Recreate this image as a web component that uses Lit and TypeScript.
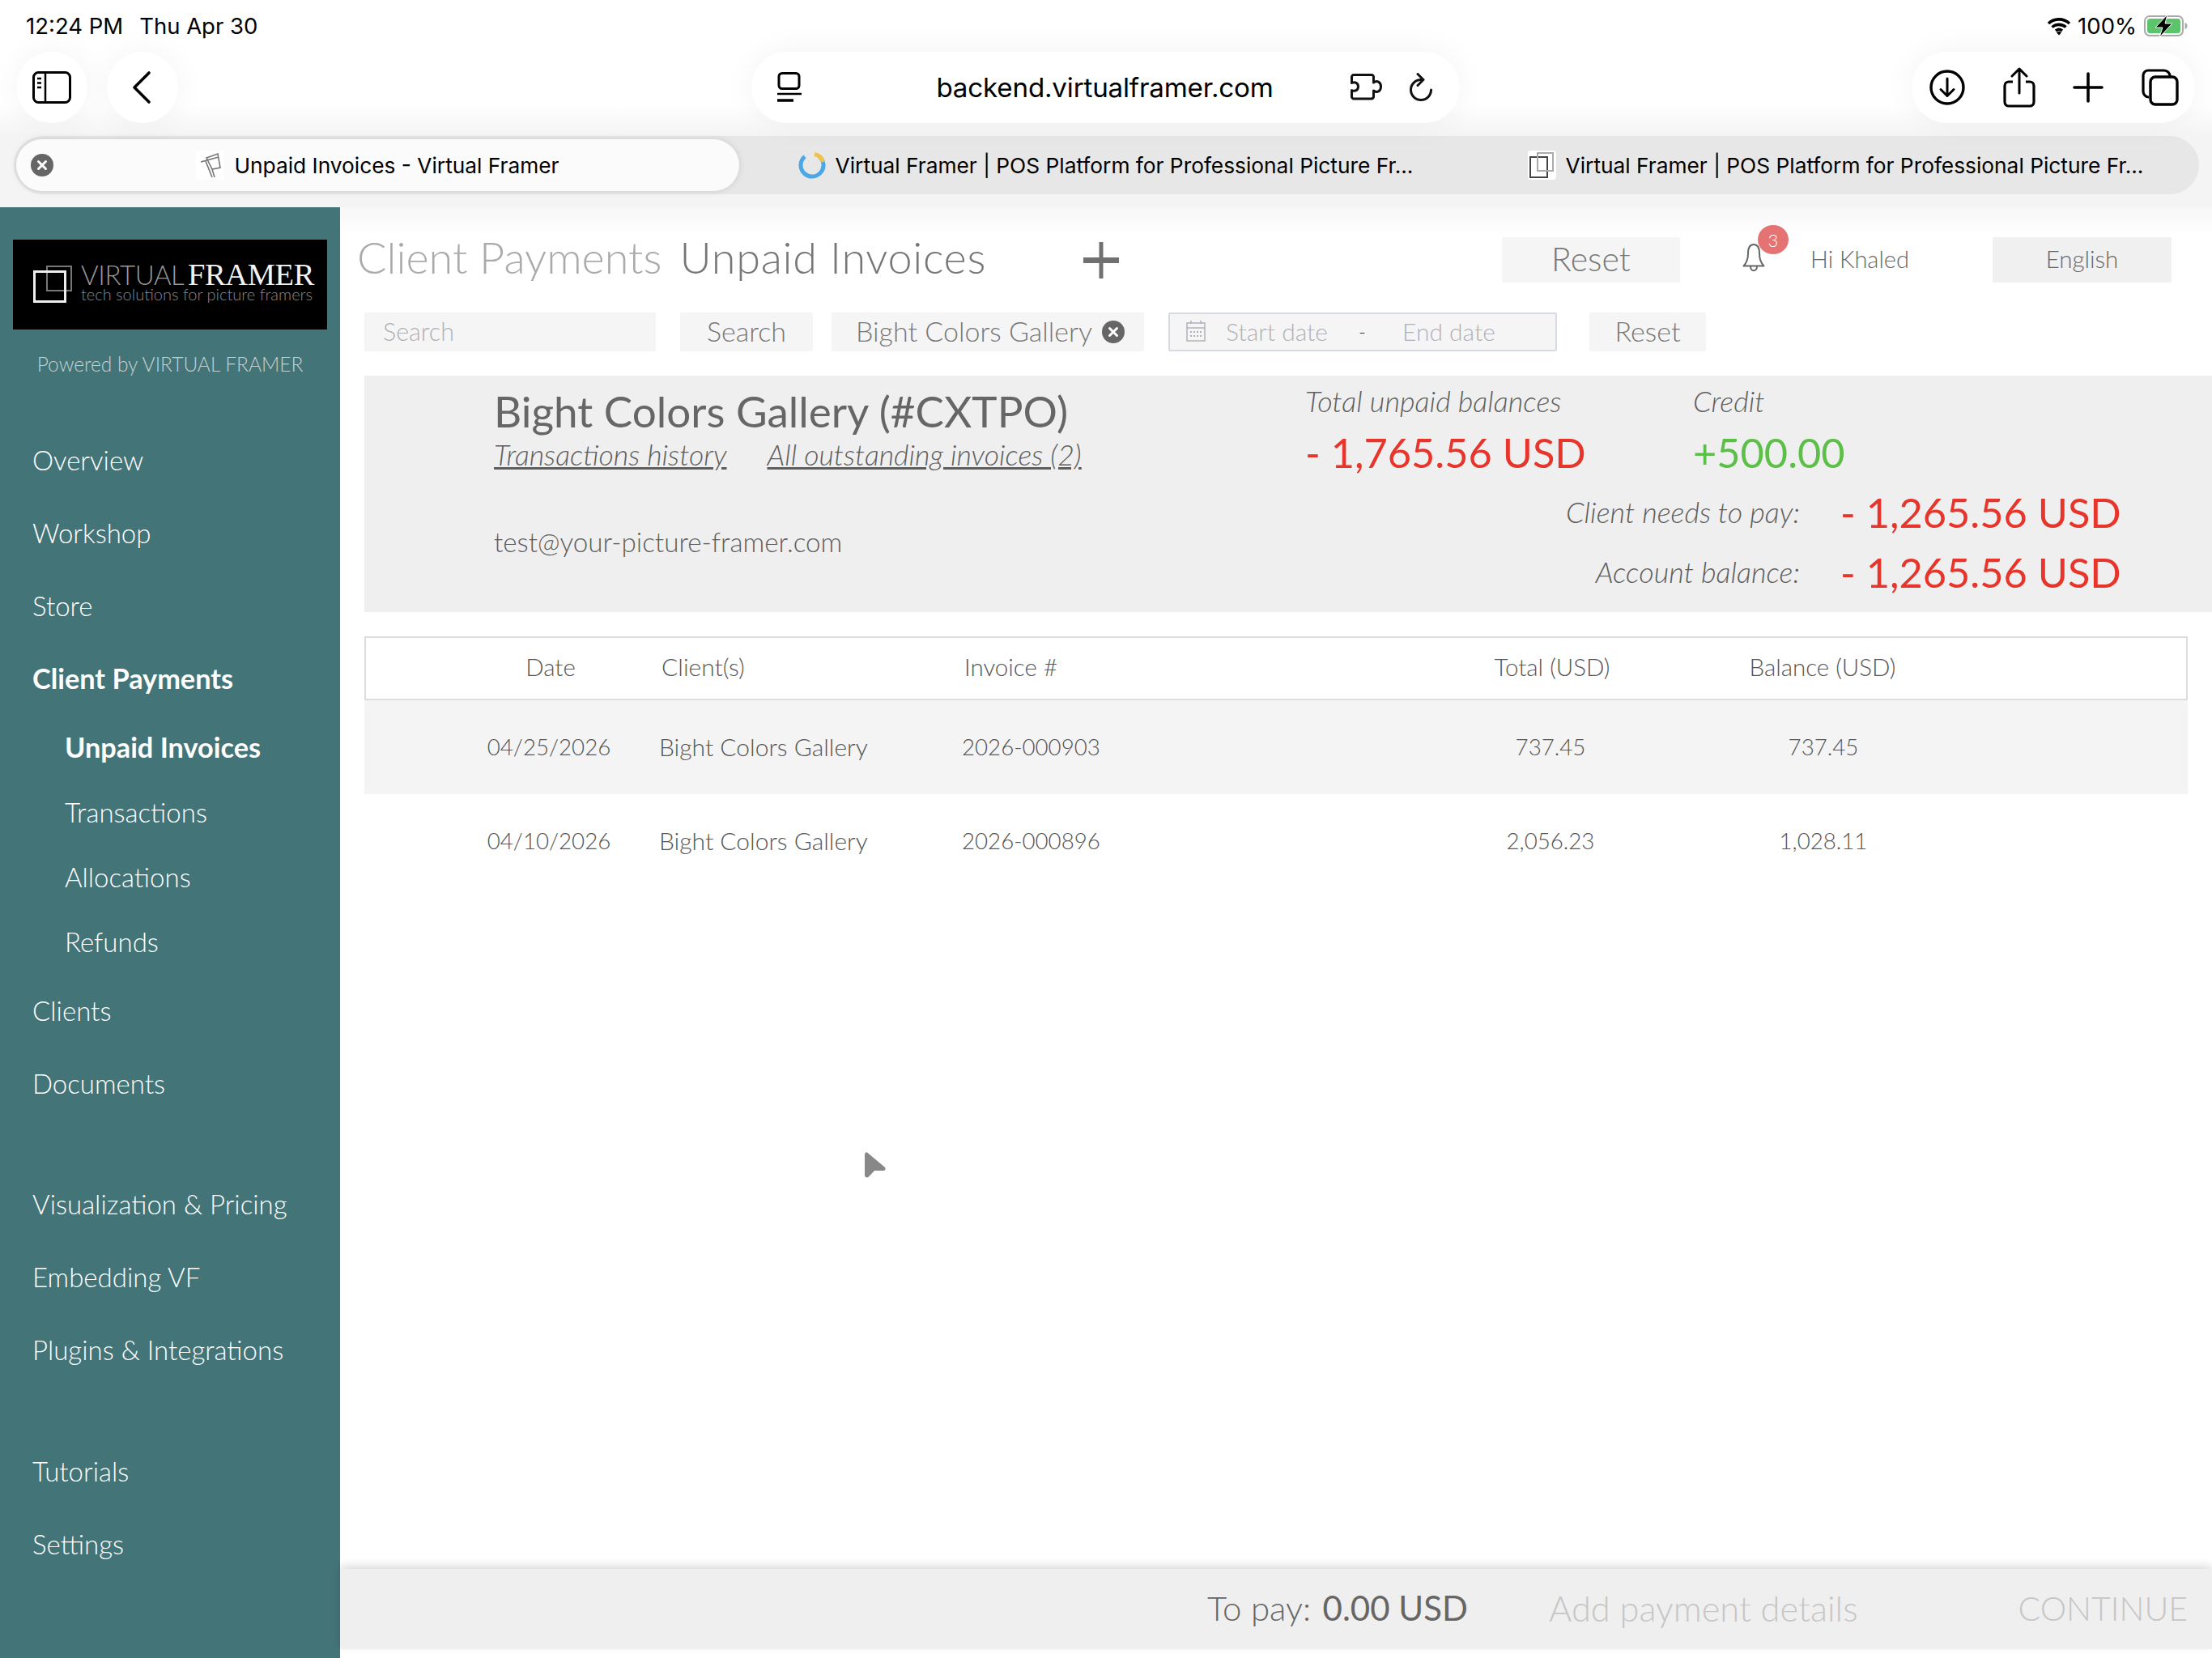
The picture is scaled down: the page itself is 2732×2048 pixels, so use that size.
import { LitElement, html, css } from "lit";
import { customElement } from "lit/decorators.js";

const closeIcon = (d: number, c: string) => html`<svg width=${d} height=${d} viewBox="0 0 28 28"><circle cx="14" cy="14" r="14" fill=${c}/><path d="M9.500 9.500l9 9M18.500 9.500l-9 9" stroke="#fff" stroke-width="3" stroke-linecap="round"/></svg>`;

const navGroups: { label: string; bold?: boolean; sub?: boolean }[][] = [
  [
    { label: "Overview" }, { label: "Workshop" }, { label: "Store" },
    { label: "Client Payments", bold: true },
    { label: "Unpaid Invoices", bold: true, sub: true },
    { label: "Transactions", sub: true }, { label: "Allocations", sub: true }, { label: "Refunds", sub: true },
    { label: "Clients" }, { label: "Documents" },
  ],
  [{ label: "Visualization & Pricing" }, { label: "Embedding VF" }, { label: "Plugins & Integrations" }],
  [{ label: "Tutorials" }, { label: "Settings" }],
];

const rows = [
  { date: "04/25/2026", client: "Bight Colors Gallery", invoice: "2026-000903", total: "737.45", balance: "737.45" },
  { date: "04/10/2026", client: "Bight Colors Gallery", invoice: "2026-000896", total: "2,056.23", balance: "1,028.11" },
];

@customElement("app-root")
export class AppRoot extends LitElement {
  static styles = css`
    :host { display: block; width: 2732px; height: 2048px; background: #fff; font-family: Lato, "Noto Sans", sans-serif; font-weight: 300; color: #666; position: relative; overflow: hidden; }
    * { box-sizing: border-box; }
    svg { display: block; flex: none; }
    .chrome { height: 256px; font-family: Inter, "Liberation Sans", sans-serif; font-weight: 400; color: #000; background: linear-gradient(#fff 0, #fff 130px, #f4f4f4 168px); }
    .status { height: 64px; display: flex; justify-content: space-between; align-items: center; padding: 0 30px 0 32px; font-size: 27.500px; }
    .status-left { display: flex; gap: 20px; }
    .status-right { display: flex; align-items: center; gap: 9px; }
    .wifi { margin: 0 -1px 0 -4px; }
    .toolbar { height: 88px; display: grid; grid-template-columns: 908px 875px 1fr; padding-left: 20px; }
    .tl { display: flex; gap: 24px; }
    .circle { width: 88px; height: 88px; border-radius: 44px; background: #fff; display: flex; align-items: center; justify-content: center; box-shadow: 0 0 40px rgba(0,0,0,.05); }
    .back { padding-right: 2px; }
    .url { height: 88px; border-radius: 44px; background: #fff; box-shadow: 0 0 40px rgba(0,0,0,.05); display: grid; grid-template-columns: 1fr auto 1fr; align-items: center; padding: 0 33px 0 31px; }
    .url-text { font-size: 33.200px; letter-spacing: -.2px; text-align: center; }
    .url-icons { display: flex; align-items: center; gap: 32px; justify-self: end; }
    .tr { justify-self: end; margin-right: 21px; width: 350px; height: 88px; border-radius: 44px; background: #fff; box-shadow: 0 0 40px rgba(0,0,0,.05); display: flex; align-items: center; padding: 0 20px 0 22px; justify-content: space-between; }
    .tabs { height: 72px; margin: 16px 16px 0 17px; border-radius: 36px; background: #e7e7e7; display: grid; grid-template-columns: 896px 905px 1fr; align-items: center; font-size: 26.300px; }
    .tab { display: flex; align-items: center; justify-content: center; gap: 12px; white-space: nowrap; height: 64px; }
    .tab.active { margin-left: 3px; border-radius: 32px; background: #fbfbfb; box-shadow: 0 0 8px rgba(0,0,0,.12); position: relative; }
    .tab-close { position: absolute; left: 18px; top: 18px; }
    .fav { width: 35px; height: 36px; background: #fff; border-radius: 4px; display: flex; align-items: center; justify-content: center; }

    .body { display: flex; height: 1792px; }
    .side { width: 420px; flex: none; background: #437478; color: #fff; font-size: 33px; }
    .logo { margin: 40px 16px 0; height: 111px; background: #000; display: flex; align-items: flex-start; padding: 32px 0 0 25px; }
    .logo-text { margin-left: 11px; margin-top: -5px; }
    .logo-top { display: flex; font-size: 33px; line-height: 32px; height: 28px; }
    .logo-v { color: #999; font-weight: 300; letter-spacing: -.4px; width: 132px; white-space: nowrap; }
    .logo-f { color: #f2f2f2; font-family: "Liberation Serif", serif; font-weight: 400; font-size: 38.500px; letter-spacing: -.4px; }
    .logo-sub { color: #888; font-size: 20px; line-height: 24px; white-space: nowrap; font-weight: 300; }
    .powered { margin-top: 25px; height: 36px; line-height: 36px; text-align: center; font-size: 24.500px; color: #c3d0d1; white-space: nowrap; }
    .nav { margin-top: 55px; }
    .group + .group { margin-top: 59px; }
    .group:last-child { margin-top: 60px; }
    .nav-item { height: 90px; line-height: 90px; padding-left: 40px; white-space: nowrap; }
    .nav-item.sub { height: 80px; line-height: 80px; padding-left: 80px; }
    .nav-item.bold { font-weight: 700; font-size: 34.300px; }

    .main { flex: 1; display: flex; flex-direction: column; min-width: 0; background: linear-gradient(#f7f7f7 0, #fff 36px); position: relative; }
    .head { margin-top: 37px; height: 56px; display: flex; align-items: center; padding-left: 21px; }
    .titles { width: 897px; display: flex; font-size: 54px; white-space: nowrap; gap: 22px; line-height: 56px; margin-bottom: 6px; }
    .t1 { color: #aaa; }
    .t2 { color: #777; letter-spacing: .7px; }
    .btn { background: #f5f5f5; display: flex; align-items: center; justify-content: center; border-radius: 2px; white-space: nowrap; color: #777; padding-bottom: 3px; }
    .reset1 { margin-left: 473px; width: 220px; height: 56px; font-size: 41px; }
    .bell { margin: 0 0 6px 77px; width: 28px; height: 36px; position: relative; }
    .badge { position: absolute; left: 19px; top: -22px; width: 38px; height: 36px; border-radius: 50%; background: #e57373; color: #fff; font-size: 22px; display: flex; align-items: center; justify-content: center; }
    .hi { margin-left: 56px; width: 225px; font-size: 29px; white-space: nowrap; margin-bottom: 3px; }
    .lang { width: 221px; height: 56px; font-size: 29.500px; background: #f0f0f0; color: #666; }
    .filters { margin-top: 37px; padding-left: 30px; height: 48px; display: flex; font-size: 34px; }
    .filters > * { height: 48px; flex: none; }
    .search { width: 360px; background: #f5f5f5; color: #b0b0b8; padding: 0 0 2px 23px; font-size: 30.500px; display: flex; align-items: center; }
    .f-search { margin-left: 30px; width: 164px; }
    .chip { margin-left: 23px; width: 386px; gap: 12px; padding-left: 6px; }
    .chip svg { margin-top: 3px; }
    .date { margin-left: 30px; width: 480px; background: #f5f5f5; border: 2px solid #d6dbe2; border-radius: 2px; display: flex; align-items: center; color: #b0b0b8; font-size: 30px; padding: 0 0 2px 20px; }
    .date .s { margin-left: 25px; width: 164px; }
    .date .d { color: #333; width: 54px; font-size: 24px; }
    .f-reset { margin-left: 40px; width: 144px; }

    .panel { margin: 30px 0 0 30px; height: 292px; background: #efefef; display: flex; padding-left: 160px; color: #5e5e5e; }
    .p-left { width: 1002px; flex: none; padding-top: 16px; }
    .p-title { font-size: 53px; line-height: 56px; font-weight: 400; white-space: nowrap; color: #666; }
    .p-links { display: flex; gap: 50px; margin-top: 5px; font-size: 35.700px; line-height: 42px; font-style: italic; }
    .p-links span { text-decoration: underline; white-space: nowrap; }
    .p-mail { margin-top: 65px; font-size: 33.200px; line-height: 42px; white-space: nowrap; }
    .p-right { flex: 1; padding-top: 10px; }
    .totals { display: flex; }
    .totals > div { width: 479px; }
    .lbl { font-size: 36px; line-height: 42px; font-style: italic; white-space: nowrap; }
    .amt { font-size: 50.500px; line-height: 62px; margin-top: 12px; white-space: nowrap; font-weight: 400; color: #e8352b; }
    .amt.green { color: #5cbf47; }
    .due { display: grid; grid-template-columns: 611px auto; column-gap: 50px; align-items: center; justify-content: start; margin-top: 12px; }
    .due .lbl { text-align: right; padding-bottom: 2px; }
    .due .amt { margin: 0; }
    .due .gap { height: 12px; grid-column: 1 / 3; }

    .table { margin: 30px 30px 0; }
    .tr-row { display: grid; grid-template-columns: 364px 374px 512px 430px 244px; align-items: center; font-size: 27.700px; height: 116px; white-space: nowrap; color: #555; padding-bottom: 2px; }
    .tr-row.h { height: 79px; border: 2px solid #ddd; font-size: 29.500px; padding-bottom: 5px; }
    .tr-row.alt { background: #f4f4f4; }
    .c0 { padding-left: 92px; text-align: center; }
    .c1 { font-size: 30px; }
    .c3, .c4 { text-align: center; }
    .h .c1, .h .c2 { padding-left: 1px; }
    .h .c4 { padding-right: 6px; }

    .foot { margin-top: auto; margin-bottom: 11px; height: 99px; background: #efefef; box-shadow: 0 -4px 10px rgba(0,0,0,.14); display: flex; align-items: center; font-size: 42px; padding: 0 30px 3px 1071px; white-space: nowrap; }
    .pay b { font-weight: 400; margin-left: 3px; }
    .add { color: #c6c6c6; margin-left: 100px; font-size: 43.400px; }
    .cont { color: #c6c6c6; margin-left: auto; font-size: 41px; }
    .cursor { position: absolute; left: 1068px; top: 1422px; }
  `;

  render() {
    return html`
      <div class="chrome">
        <div class="status">
          <div class="status-left"><span>12:24 PM</span><span>Thu Apr 30</span></div>
          <div class="status-right">
            <svg class="wifi" width="30" height="24" viewBox="0 0 30 24"><path d="M2 9a19 19 0 0 1 26 0M6.500 13.500a13 13 0 0 1 17 0M11 18a6.500 6.500 0 0 1 8 0" fill="none" stroke="#000" stroke-width="3.600"/><path d="M12 20.200a5 5 0 0 1 6 0L15 23.500z" fill="#000"/></svg>
            <span>100%</span>
            <svg width="54" height="28" viewBox="0 0 54 28"><rect x="1" y="2" width="47" height="24" rx="6" fill="none" stroke="#aaa" stroke-width="2"/><rect x="4" y="5" width="41" height="18" rx="3.500" fill="#5cc46a"/><path d="M50.500 10c2 .6 3 2 3 4s-1 3.400-3 4z" fill="#aaa"/><path d="M29 0L14 16h9l-4 12 16-17h-9z" fill="#000" stroke="#fff" stroke-width="1"/></svg>
          </div>
        </div>
        <div class="toolbar">
          <div class="tl">
            <div class="circle">
              <svg width="48" height="40" viewBox="0 0 48 40"><rect x="1.500" y="1.500" width="45" height="37" rx="6" fill="none" stroke="#000" stroke-width="3"/><path d="M16 2v36" stroke="#000" stroke-width="2.500"/><path d="M6 9h5M6 14.500h5M6 20h5" stroke="#000" stroke-width="2.500"/></svg>
            </div>
            <div class="circle back">
              <svg width="26" height="42" viewBox="0 0 26 42"><path d="M22 3L4 21l18 18" fill="none" stroke="#000" stroke-width="3.600" stroke-linecap="round" stroke-linejoin="round"/></svg>
            </div>
          </div>
          <div class="url">
            <svg width="31" height="38" viewBox="0 0 31 38"><rect x="3" y="1.500" width="25" height="19" rx="4" fill="none" stroke="#000" stroke-width="3"/><path d="M1 27h30" stroke="#000" stroke-width="2.500"/><path d="M1 35h20" stroke="#000" stroke-width="3.500"/></svg>
            <div class="url-text">backend.virtualframer.com</div>
            <div class="url-icons">
              <svg width="40" height="34" viewBox="0 0 40 34"><path d="M4 1.500h22a2.500 2.500 0 0 1 2.500 2.500v7c4-3 9-1 9 5s-5 8-9 5v7a3 3 0 0 1-2.500 3H4a2.500 2.500 0 0 1-2.500-2.500v-8c4 2 8 0 8-4.500s-4-6.500-8-4.500V4A2.500 2.500 0 0 1 4 1.500z" fill="none" stroke="#111" stroke-width="3" stroke-linejoin="round"/></svg>
              <svg width="30" height="36" viewBox="0 0 30 36"><path d="M15 8.500A12.500 12.500 0 1 0 27.500 21" fill="none" stroke="#111" stroke-width="3" stroke-linecap="round"/><path d="M11 1.500l7 7-7 7" fill="none" stroke="#111" stroke-width="3" stroke-linecap="round" stroke-linejoin="round"/></svg>
            </div>
          </div>
          <div class="tr">
            <svg width="44" height="44" viewBox="0 0 44 44"><circle cx="22" cy="22" r="20" fill="none" stroke="#000" stroke-width="3.400"/><path d="M22 11v21M14 24.500l8 8 8-8" fill="none" stroke="#000" stroke-width="3" stroke-linecap="round" stroke-linejoin="round"/></svg>
            <svg width="40" height="50" viewBox="0 0 40 50"><path d="M12 18H7a5 5 0 0 0-5 5v20a5 5 0 0 0 5 5h26a5 5 0 0 0 5-5V23a5 5 0 0 0-5-5h-5" fill="none" stroke="#000" stroke-width="3.200"/><path d="M20 32V3M11 11l9-9 9 9" fill="none" stroke="#000" stroke-width="3" stroke-linecap="round" stroke-linejoin="round"/></svg>
            <svg width="38" height="38" viewBox="0 0 38 38"><path d="M19 2v34M2 19h34" stroke="#000" stroke-width="3.600" stroke-linecap="round"/></svg>
            <svg width="46" height="46" viewBox="0 0 46 46"><path d="M9 35a7 7 0 0 1-7-7V8a6 6 0 0 1 6-6h20a7 7 0 0 1 7 7" fill="none" stroke="#000" stroke-width="3.200"/><rect x="11" y="10" width="33" height="34" rx="6" fill="none" stroke="#000" stroke-width="3.400"/></svg>
          </div>
        </div>
        <div class="tabs">
          <div class="tab active">
            <span class="tab-close">${closeIcon(28, "#666")}</span>
            <span class="fav"><svg width="30" height="34" viewBox="0 0 30 34"><path d="M10 8l14-5 3 17-10 2zM3 13l22-6M9 12l8 20M17 22l3 10" fill="none" stroke="#777" stroke-width="1.600"/></svg></span>
            <span>Unpaid Invoices - Virtual Framer</span>
          </div>
          <div class="tab">
            <svg width="34" height="34" viewBox="0 0 34 34"><circle cx="17" cy="17" r="14" fill="none" stroke="#4aa8e8" stroke-width="5" stroke-dasharray="68 20" transform="rotate(-50 17 17)"/><path d="M20 3.500A14 14 0 0 1 30.500 13" fill="none" stroke="#f2c14e" stroke-width="5"/></svg>
            <span>Virtual Framer | POS Platform for Professional Picture Fr...</span>
          </div>
          <div class="tab">
            <span class="fav"><svg width="32" height="34" viewBox="0 0 32 34"><rect x="2" y="7" width="21" height="25" fill="none" stroke="#444" stroke-width="2"/><rect x="11" y="2" width="19" height="22" fill="none" stroke="#aaa" stroke-width="2"/></svg></span>
            <span>Virtual Framer | POS Platform for Professional Picture Fr...</span>
          </div>
        </div>
      </div>
      <div class="body">
        <aside class="side">
          <div class="logo">
            <svg width="48" height="46" viewBox="0 0 48 46"><rect x="17" y="1" width="30" height="30" fill="none" stroke="#777" stroke-width="2"/><rect x="1.500" y="7.500" width="38" height="37" fill="none" stroke="#eee" stroke-width="3"/></svg>
            <div class="logo-text">
              <div class="logo-top"><span class="logo-v">VIRTUAL</span><span class="logo-f">FRAMER</span></div>
              <div class="logo-sub">tech solutions for picture framers</div>
            </div>
          </div>
          <div class="powered">Powered by VIRTUAL FRAMER</div>
          <nav class="nav">
            ${navGroups.map(g => html`<div class="group">${g.map(i => html`<div class="nav-item ${i.sub ? "sub" : ""} ${i.bold ? "bold" : ""}">${i.label}</div>`)}</div>`)}
          </nav>
        </aside>
        <main class="main">
          <div class="head">
            <div class="titles"><span class="t1">Client Payments</span><span class="t2">Unpaid Invoices</span></div>
            <svg width="44" height="45" viewBox="0 0 44 45"><path d="M22 0v45" stroke="#707070" stroke-width="5"/><path d="M0 22.500h44" stroke="#707070" stroke-width="7"/></svg>
            <div class="btn reset1">Reset</div>
            <div class="bell">
              <svg width="28" height="36" viewBox="0 0 28 36"><path d="M14 2c-5 0-7 5-7 11 0 6-1 11-5.500 15.500h25C22 24 21 19 21 13c0-6-2-11-7-11z" fill="none" stroke="#666" stroke-width="2" stroke-linejoin="round"/><path d="M10 29c0 7 8 7 8 0" fill="none" stroke="#666" stroke-width="2"/></svg>
              <div class="badge">3</div>
            </div>
            <div class="hi">Hi Khaled</div>
            <div class="btn lang">English</div>
          </div>
          <div class="filters">
            <div class="search">Search</div>
            <div class="btn f-search">Search</div>
            <div class="btn chip"><span>Bight Colors Gallery</span>${closeIcon(28, "#666")}</div>
            <div class="date">
              <svg width="24" height="26" viewBox="0 0 24 26"><rect x="1" y="3" width="22" height="22" fill="none" stroke="#b0b0b8" stroke-width="1.500"/><path d="M1 9h22M6 0v4M18 0v4" stroke="#b0b0b8" stroke-width="1.500"/><path d="M5 14h14M5 19h14" stroke="#b0b0b8" stroke-width="2" stroke-dasharray="2 2"/></svg>
              <span class="s">Start date</span><span class="d">-</span><span>End date</span>
            </div>
            <div class="btn f-reset">Reset</div>
          </div>
          <section class="panel">
            <div class="p-left">
              <div class="p-title">Bight Colors Gallery (#CXTPO)</div>
              <div class="p-links"><span>Transactions history</span><span>All outstanding invoices (2)</span></div>
              <div class="p-mail">test@your-picture-framer.com</div>
            </div>
            <div class="p-right">
              <div class="totals">
                <div><div class="lbl">Total unpaid balances</div><div class="amt">- 1,765.56 USD</div></div>
                <div><div class="lbl">Credit</div><div class="amt green">+500.00</div></div>
              </div>
              <div class="due">
                <div class="lbl">Client needs to pay:</div><div class="amt">- 1,265.56 USD</div>
                <div class="gap"></div>
                <div class="lbl">Account balance:</div><div class="amt">- 1,265.56 USD</div>
              </div>
            </div>
          </section>
          <section class="table">
            <div class="tr-row h"><div class="c0">Date</div><div class="c1">Client(s)</div><div class="c2">Invoice #</div><div class="c3">Total (USD)</div><div class="c4">Balance (USD)</div></div>
            ${rows.map((r, i) => html`<div class="tr-row ${i === 0 ? "alt" : ""}"><div class="c0">${r.date}</div><div class="c1">${r.client}</div><div class="c2">${r.invoice}</div><div class="c3">${r.total}</div><div class="c4">${r.balance}</div></div>`)}
          </section>
          <div class="foot">
            <div class="pay">To pay: <b>0.00 USD</b></div>
            <div class="add">Add payment details</div>
            <div class="cont">CONTINUE</div>
          </div>
        </main>
      </div>
      <svg class="cursor" width="26" height="33" viewBox="0 0 26 33"><path d="M3 1.500c-1-.5-3 0-3 3v25c0 3 3 4 5 2l7-7.500h10.500c3 0 4-2.500 2-4.500z" fill="#888"/></svg>
    `;
  }
}
